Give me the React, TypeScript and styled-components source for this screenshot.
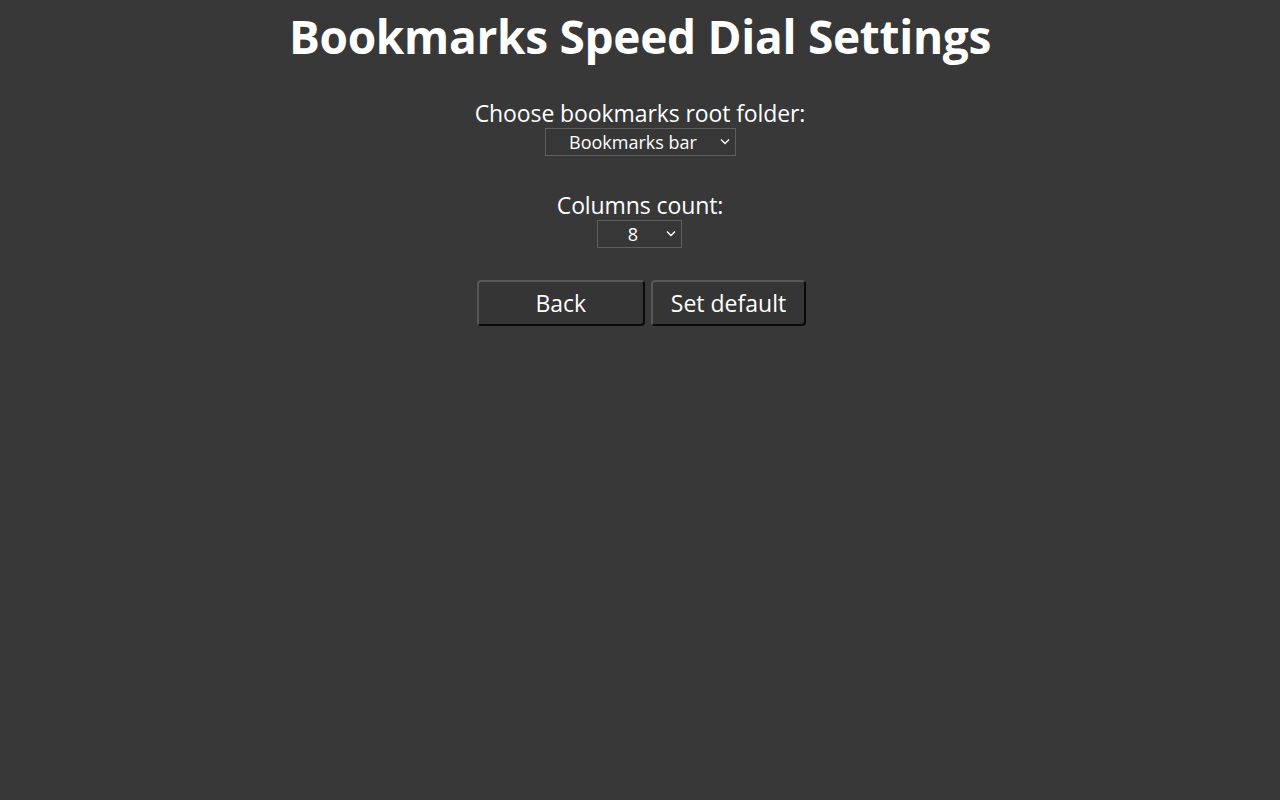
import React, { useState } from 'react';
import styled, { createGlobalStyle } from 'styled-components';

const GlobalStyle = createGlobalStyle`
  html, body {
    margin: 0;
    padding: 0;
    background-color: #383838;
    color: #ffffff;
    font-family: 'Open Sans', 'Noto Sans', sans-serif;
  }
`;

const Page = styled.div`
  display: flex;
  flex-direction: column;
  align-items: center;
  padding-top: 7px;
  min-height: 793px;
`;

const Title = styled.h1`
  margin: 0 0 33px 0;
  font-size: 46px;
  line-height: 58px;
  font-weight: 700;
  letter-spacing: -0.3px;
`;

const Field = styled.div`
  display: flex;
  flex-direction: column;
  align-items: center;
  margin-bottom: 34px;
`;

const Label = styled.label`
  font-size: 23px;
  line-height: 30px;
  letter-spacing: -0.1px;
`;

const SelectWrap = styled.div`
  position: relative;
  display: inline-flex;
`;

const Select = styled.select<{ width: number }>`
  appearance: none;
  width: ${({ width }) => width}px;
  height: 28px;
  box-sizing: border-box;
  padding: 0 22px 0 8px;
  background-color: #373737;
  color: #ffffff;
  border: 1px solid #5e5e5e;
  border-radius: 0;
  font-family: 'Open Sans', 'Noto Sans', sans-serif;
  font-size: 18px;
  text-align: center;
  text-align-last: center;
  outline: none;
`;

const Chevron = styled.svg`
  position: absolute;
  right: 6px;
  top: 10px;
  width: 10px;
  height: 7px;
  pointer-events: none;
`;

const Buttons = styled.div`
  display: flex;
  gap: 6px;
  margin-top: -2px;
  margin-left: 3px;
`;

const Button = styled.button<{ width?: number }>`
  ${({ width }) => (width ? `width: ${width}px;` : 'padding: 0 18px;')}
  height: 46px;
  box-sizing: border-box;
  background-color: #353535;
  color: #ffffff;
  border: 2px solid;
  border-color: #575757 #0a0a0a #0a0a0a #575757;
  border-radius: 4px;
  font-family: 'Open Sans', 'Noto Sans', sans-serif;
  font-size: 23px;
  cursor: pointer;
`;

interface DropdownProps {
  id: string;
  width: number;
  value: string;
  options: string[];
  onChange: (value: string) => void;
}

function Dropdown({ id, width, value, options, onChange }: DropdownProps) {
  return (
    <SelectWrap>
      <Select
        id={id}
        width={width}
        value={value}
        onChange={(e) => onChange(e.target.value)}
      >
        {options.map((option) => (
          <option key={option} value={option}>
            {option}
          </option>
        ))}
      </Select>
      <Chevron viewBox="0 0 10 7">
        <path d="M1 1.5 L5 5.5 L9 1.5" fill="none" stroke="#ffffff" strokeWidth="1.4" />
      </Chevron>
    </SelectWrap>
  );
}

function App() {
  const [folder, setFolder] = useState('Bookmarks bar');
  const [columns, setColumns] = useState('8');

  return (
    <>
      <GlobalStyle />
      <Page>
        <Title>Bookmarks Speed Dial Settings</Title>

        <Field>
          <Label htmlFor="root-folder">Choose bookmarks root folder:</Label>
          <Dropdown
            id="root-folder"
            width={191}
            value={folder}
            options={['Bookmarks bar', 'Other bookmarks', 'Mobile bookmarks']}
            onChange={setFolder}
          />
        </Field>

        <Field>
          <Label htmlFor="columns-count">Columns count:</Label>
          <Dropdown
            id="columns-count"
            width={85}
            value={columns}
            options={['4', '5', '6', '7', '8', '9', '10']}
            onChange={setColumns}
          />
        </Field>

        <Buttons>
          <Button width={168}>Back</Button>
          <Button>Set default</Button>
        </Buttons>
      </Page>
    </>
  );
}

export default App;
